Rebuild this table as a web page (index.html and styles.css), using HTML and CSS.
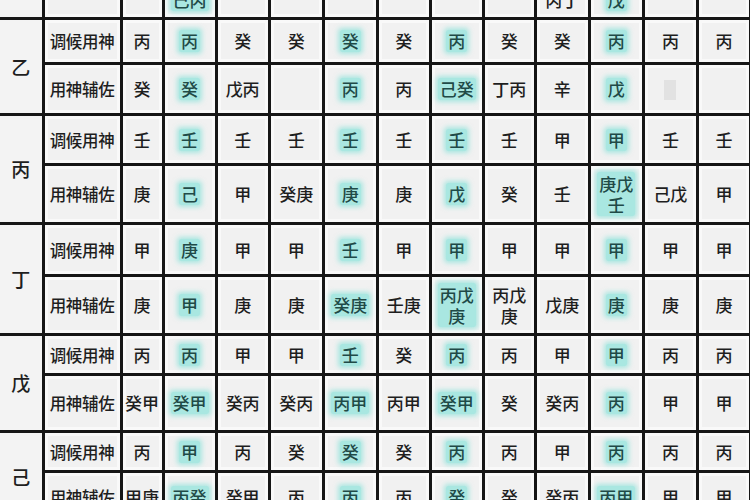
FILE: index.html
```html
<!DOCTYPE html>
<html lang="zh">
<head>
<meta charset="utf-8">
<link rel="stylesheet" href="styles.css">
</head>
<body>
<div class="frame">
<table class="grid">
<colgroup>
<col class="c-stem"><col class="c-label"><col class="c-first">
<col class="c53"><col class="c53"><col class="c54"><col class="c54"><col class="c53">
<col class="c53"><col class="c52"><col class="c54"><col class="c54"><col class="c54"><col class="c53">
</colgroup>
<tbody>
<tr class="r-top">
<td class="stem"></td><td class="label"></td><td></td><td><span class="hl">己丙</span></td><td></td><td></td><td></td><td></td><td></td><td></td><td>丙丁</td><td><span class="hl">戊</span></td><td></td><td></td>
</tr>

<tr class="r45">
<td class="stem" rowspan="2">乙</td><td class="label">调候用神</td><td>丙</td><td><span class="hl">丙</span></td><td>癸</td><td>癸</td><td><span class="hl">癸</span></td><td>癸</td><td><span class="hl">丙</span></td><td>癸</td><td>癸</td><td><span class="hl">丙</span></td><td>丙</td><td>丙</td>
</tr>
<tr class="r51 grp-end">
<td class="label">用神辅佐</td><td>癸</td><td><span class="hl">癸</span></td><td>戊丙</td><td></td><td><span class="hl">丙</span></td><td>丙</td><td><span class="hl">己癸</span></td><td>丁丙</td><td>辛</td><td><span class="hl">戊</span></td><td><span class="ph"></span></td><td></td>
</tr>

<tr class="r50">
<td class="stem" rowspan="2">丙</td><td class="label">调候用神</td><td>壬</td><td><span class="hl">壬</span></td><td>壬</td><td>壬</td><td><span class="hl">壬</span></td><td>壬</td><td><span class="hl">壬</span></td><td>壬</td><td>甲</td><td><span class="hl">甲</span></td><td>壬</td><td>壬</td>
</tr>
<tr class="r59 grp-end">
<td class="label">用神辅佐</td><td>庚</td><td><span class="hl">己</span></td><td>甲</td><td>癸庚</td><td><span class="hl">庚</span></td><td>庚</td><td><span class="hl">戊</span></td><td>癸</td><td>壬</td><td><span class="hl two">庚戊<br>壬</span></td><td>己戊</td><td>甲</td>
</tr>

<tr class="r52">
<td class="stem" rowspan="2">丁</td><td class="label">调候用神</td><td>甲</td><td><span class="hl">庚</span></td><td>甲</td><td>甲</td><td><span class="hl">壬</span></td><td>甲</td><td><span class="hl">甲</span></td><td>甲</td><td>甲</td><td><span class="hl">甲</span></td><td>甲</td><td>甲</td>
</tr>
<tr class="r59 grp-end">
<td class="label">用神辅佐</td><td>庚</td><td><span class="hl">甲</span></td><td>庚</td><td>庚</td><td><span class="hl">癸庚</span></td><td>壬庚</td><td><span class="hl two">丙戊<br>庚</span></td><td class="two">丙戊<br>庚</td><td>戊庚</td><td><span class="hl">庚</span></td><td>庚</td><td>庚</td>
</tr>

<tr class="r40">
<td class="stem" rowspan="2">戊</td><td class="label">调候用神</td><td>丙</td><td><span class="hl">丙</span></td><td>甲</td><td>甲</td><td><span class="hl">壬</span></td><td>癸</td><td><span class="hl">丙</span></td><td>丙</td><td>甲</td><td><span class="hl">甲</span></td><td>丙</td><td>丙</td>
</tr>
<tr class="r57 grp-end">
<td class="label">用神辅佐</td><td>癸甲</td><td><span class="hl">癸甲</span></td><td>癸丙</td><td>癸丙</td><td><span class="hl">丙甲</span></td><td>丙甲</td><td><span class="hl">癸甲</span></td><td>癸</td><td>癸丙</td><td><span class="hl">丙</span></td><td>甲</td><td>甲</td>
</tr>

<tr class="r40">
<td class="stem" rowspan="2">己</td><td class="label">调候用神</td><td>丙</td><td><span class="hl">甲</span></td><td>丙</td><td>癸</td><td><span class="hl">癸</span></td><td>癸</td><td><span class="hl">丙</span></td><td>丙</td><td>甲</td><td><span class="hl">丙</span></td><td>丙</td><td>丙</td>
</tr>
<tr class="r50">
<td class="label">用神辅佐</td><td>甲庚</td><td><span class="hl">丙癸</span></td><td>癸甲</td><td>丙</td><td><span class="hl">丙</span></td><td>丙</td><td><span class="hl">癸</span></td><td>癸</td><td>癸丙</td><td><span class="hl">丙甲</span></td><td>甲</td><td>甲</td>
</tr>
</tbody>
</table>
</div>
</body>
</html>
```

FILE: styles.css
```css
html, body {
  margin: 0;
  padding: 0;
  background: #f4f4f4;
}

.frame {
  width: 750px;
  height: 500px;
  overflow: hidden;
}

.grid {
  margin-top: -20px;
  width: 752px;
  table-layout: fixed;
  border-collapse: collapse;
  font-family: "Noto Sans CJK SC", "Noto Sans", sans-serif;
  font-weight: 500;
  color: #1e1e1e;
}

.c-stem { width: 43px; }
.c-label { width: 78px; }
.c-first { width: 42px; }
.c52 { width: 52px; }
.c53 { width: 53px; }
.c54 { width: 54px; }

.grid td {
  border: 3px solid #161616;
  background: #f1f1f1;
  box-shadow: inset 0 0 0 3px #f9f9f9;
  text-align: center;
  vertical-align: middle;
  font-size: 17px;
  line-height: 20px;
  padding: 0;
  white-space: nowrap;
}

.grid td.stem {
  border-left: none;
  background: #f3f3f3;
  box-shadow: none;
  font-size: 19px;
}

.grid td.label {
  font-size: 16.5px;
  letter-spacing: -0.3px;
}

.r-top { height: 37px; }
.r40 { height: 40px; }
.r45 { height: 45px; }
.r50 { height: 50px; }
.r51 { height: 51px; }
.r52 { height: 52px; }
.r57 { height: 57px; }
.r59 { height: 59px; }

.hl {
  display: inline-block;
  padding: 1px 2px;
  color: #1f4a47;
  background: rgba(110, 222, 212, 0.55);
  box-shadow: 0 0 5px 2px rgba(110, 222, 212, 0.55);
  border-radius: 2px;
}

.hl.two, td.two {
  line-height: 21px;
}

.ph {
  display: inline-block;
  width: 12px;
  height: 20px;
  background: #e2e2e2;
  vertical-align: middle;
}
```
